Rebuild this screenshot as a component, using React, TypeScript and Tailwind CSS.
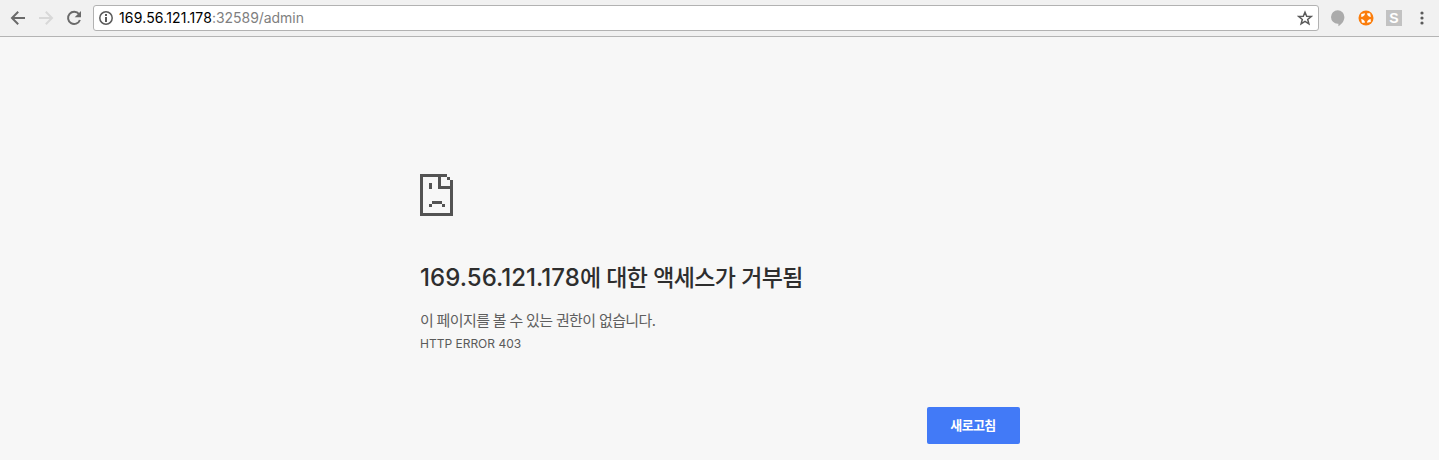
import React from 'react';

const latin = "font-['Inter','Noto_Sans_CJK_KR',sans-serif]";
const korean = "font-['Noto_Sans_CJK_KR',sans-serif]";

function Toolbar() {
  return (
    <header className="flex h-[37px] w-full shrink-0 items-center border-b border-[#b4b4b4] bg-[#f1f1f1]">
      <svg className="ml-[10px] shrink-0" width="16" height="16" viewBox="0 0 16 16" fill="none" stroke="#6a6a6a" strokeWidth="2">
        <path d="M15 8H2.5M8.2 1.8 2 8l6.200 6.200" />
      </svg>
      <svg className="ml-[12px] shrink-0" width="16" height="16" viewBox="0 0 16 16" fill="none" stroke="#d8d8d8" strokeWidth="2">
        <path d="M1 8h12.500M7.800 1.800 14 8l-6.200 6.200" />
      </svg>
      <svg className="ml-[12px] shrink-0" width="16" height="16" viewBox="0 0 16 16">
        <path d="M13 4.200A6.100 6.100 0 1 0 13.900 10" fill="none" stroke="#6a6a6a" strokeWidth="2" />
        <path d="M15 1v6.300H8.700z" fill="#6a6a6a" />
      </svg>
      <div className="ml-[11px] flex h-[26px] w-[1226px] shrink-0 items-center rounded-[3px] border border-[#b2b2b2] bg-white">
        <svg className="ml-[5px] shrink-0" width="14" height="14" viewBox="0 0 14 14">
          <circle cx="7" cy="7" r="6.200" fill="none" stroke="#5a5a5a" strokeWidth="1.500" />
          <path d="M6 3.100h2v1.800H6zM6 6h2v4.900H6z" fill="#5a5a5a" />
        </svg>
        <span className={`ml-[6px] whitespace-nowrap text-[14px] leading-[18px] tracking-[0.15px] text-black ${latin}`}>
          169.56.121.178<span className="tracking-[-0.05px] text-[#7f7f7f]">:32589/admin</span>
        </span>
        <svg className="mr-[5px] ml-auto shrink-0" width="16" height="16" viewBox="0 0 16 16" fill="none" stroke="#5a5a5a" strokeWidth="1.500">
          <path d="m8 2.200 1.700 4 4.500.3-3.500 2.900 1.200 4.400L8 11.400l-3.900 2.400 1.200-4.400-3.500-2.900 4.500-.3z" />
        </svg>
      </div>
      <svg className="ml-[11px] shrink-0" width="16" height="18" viewBox="0 0 16 18">
        <path d="M7.700 1.300a6.700 6.700 0 0 0 0 13.400h.7v2.500c3.200-1.700 6-5.200 6-9.100a6.700 6.700 0 0 0-6.700-6.800z" fill="#ababab" />
      </svg>
      <svg className="ml-[12px] shrink-0" width="16" height="16" viewBox="0 0 16 16">
        <circle cx="8" cy="8" r="7.500" fill="#fb7d0b" />
        <g fill="#fff">
          <path d="M3.200 3.900 7 3.200 6.600 5 5 6.600l-1.700.3z" />
          <path d="M12.100 3.200 12.800 7 11 6.600 9.400 5l-.3-1.700z" />
          <path d="M12.800 12.100 9 12.800l.4-1.800L11 9.400l1.700-.3z" />
          <path d="M3.900 12.800 3.200 9l1.800.4L6.600 11l.3 1.700z" />
        </g>
      </svg>
      <div className="ml-[12px] flex size-4 shrink-0 items-center justify-center bg-[#c2c2c2] pb-px font-['Liberation_Sans',sans-serif] text-[14px] leading-none font-bold text-white">S</div>
      <svg className="ml-[18px] shrink-0" width="4" height="16" viewBox="0 0 4 16" fill="#5a5a5a">
        <circle cx="2" cy="3" r="1.600" /><circle cx="2" cy="8" r="1.600" /><circle cx="2" cy="13" r="1.600" />
      </svg>
    </header>
  );
}

function SadPage() {
  return (
    <svg width="33" height="42" viewBox="0 0 33 42" fill="#535353" shapeRendering="crispEdges">
      <path d="M0 0h27v3H21v9h9V6h3v36H0zM3 3v36h27V15H18V3zM27 3h3v3h-3zM9 9h3v6H9zM12 27h10v3H12zM9 30h3v3H9zM22 30h3v3h-3z" fillRule="evenodd" />
    </svg>
  );
}

export default function App() {
  return (
    <div className="flex h-[460px] w-full flex-col overflow-hidden bg-[#f7f7f7]">
      <Toolbar />
      <main className="ml-[420px] flex w-[600px] flex-col pt-[137px]">
        <SadPage />
        <h1 className={`mt-[42px] h-9 whitespace-nowrap text-[24px] leading-9 font-medium text-[#2e2e2e] ${latin}`}>
          <span className="tracking-[0.05px]">169.56.121.178</span>
          <span className={`text-[23px] tracking-[-0.6px] [word-spacing:1.200px] ${korean}`}>에 대한 액세스가 거부됨</span>
        </h1>
        <p className={`mt-[16px] h-5 whitespace-nowrap text-[15px] leading-5 tracking-[-0.58px] text-[#5e5e5e] [word-spacing:0.600px] ${korean}`}>이 페이지를 볼 수 있는 권한이 없습니다.</p>
        <p className={`mt-[6px] h-4 whitespace-nowrap text-[12px] leading-4 text-[#5a5a5a] ${latin}`}>HTTP ERROR 403</p>
        <button className={`mt-[55px] flex h-[37px] w-[93px] items-center justify-center self-end rounded-[2px] bg-[#427af7] pr-px pb-[2px] text-[13px] leading-none font-bold tracking-[-0.6px] text-white ${korean}`}>새로고침</button>
      </main>
    </div>
  );
}
